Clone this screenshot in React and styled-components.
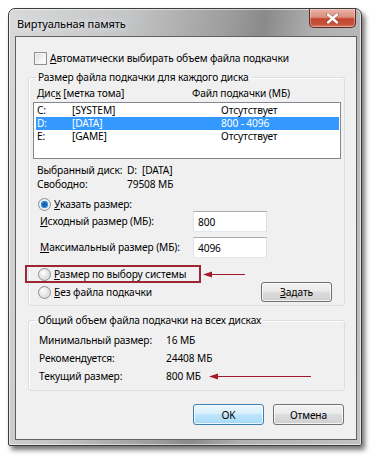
import styled, { createGlobalStyle } from "styled-components";

const GlobalStyle = createGlobalStyle`
  html, body {
    margin: 0;
    padding: 0;
    background: #ffffff;
  }
  body {
    font-family: "Noto Sans", "Open Sans", sans-serif;
    font-size: 10.2px;
    letter-spacing: -0.12px;
    color: #000;
  }
`;

const Page = styled.div`
  width: 373px;
  height: 458px;
  padding: 8px 0 0 8px;
  box-sizing: border-box;
`;

const Window = styled.div`
  width: 354px;
  height: 438px;
  box-sizing: border-box;
  display: flex;
  flex-direction: column;
  border: 1px solid #3c3c3c;
  border-radius: 7px 7px 2px 2px;
  background: linear-gradient(100deg, #d8d9da 0%, #c4c5c6 28%, #9c9c9c 52%, #8a8a8a 60%, #b0b0b0 72%, #c2c2c2 100%);
  box-shadow: 3px 4px 5px rgba(0, 0, 0, 0.55), inset 0 0 0 1px rgba(255, 255, 255, 0.55);
`;

const TitleBar = styled.div`
  height: 27px;
  display: flex;
  justify-content: space-between;
  align-items: flex-start;
  padding: 0 5px 0 8px;
`;

const Title = styled.span`
  align-self: center;
  font-size: 11px;
  letter-spacing: -0.1px;
  margin-top: 1px;
  color: #000;
  text-shadow: 0 0 6px rgba(255, 255, 255, 0.9);
`;

const CloseButton = styled.div`
  width: 47px;
  height: 19px;
  box-sizing: border-box;
  border: 1px solid #5e2a22;
  border-top: none;
  border-radius: 0 0 5px 5px;
  background: linear-gradient(180deg, #e9b3a6 0%, #dc8f7e 45%, #c54530 55%, #c8513b 85%, #d8806c 100%);
  display: flex;
  align-items: center;
  justify-content: center;
  box-shadow: inset 0 0 0 1px rgba(255, 255, 255, 0.35);
`;

const Client = styled.div`
  flex: 1;
  margin: 0 4px 5px 6px;
  background: #f0f0f0;
  border: 1px solid #5f5f5f;
  display: flex;
  flex-direction: column;
`;

const Row = styled.div`
  display: flex;
  align-items: center;
  height: ${(p) => p.$h || 13}px;
  margin-top: ${(p) => p.$mt || 0}px;
  padding-left: ${(p) => p.$pl || 0}px;
`;

const CheckBox = styled.span`
  width: 13px;
  height: 13px;
  box-sizing: border-box;
  border: 1px solid #8e8f8f;
  background: linear-gradient(135deg, #dcdcdc 0%, #f4f4f4 60%, #ffffff 100%);
  box-shadow: inset 0 0 0 1px #f4f4f4;
  margin-right: 3px;
`;

const Radio = styled.span`
  width: 13px;
  height: 13px;
  box-sizing: border-box;
  border-radius: 50%;
  border: 1px solid #8e8f8f;
  background: ${(p) =>
    p.$checked
      ? "radial-gradient(circle, #1b5fa8 0 2px, #3f8ed8 2.5px 3.5px, #e6eef6 4px)"
      : "radial-gradient(circle at 40% 35%, #ffffff 0, #e6e6e6 45%, #cfcfcf 100%)"};
  margin-right: 3px;
  flex-shrink: 0;
`;

const Label = styled.span`
  white-space: nowrap;
  line-height: 13px;
`;

const Group = styled.fieldset`
  margin: ${(p) => p.$mt}px 11px 0 12px;
  padding: ${(p) => p.$pad};
  border: 1px solid #d5dfe5;
  border-radius: 3px;
  box-shadow: 1px 1px 0 #ffffff inset;
  min-width: 0;
`;

const Legend = styled.legend`
  padding: 0 2px 0 2px;
  margin-left: 3px;
  line-height: 13px;
  white-space: nowrap;
`;

const Header = styled.div`
  display: flex;
  height: 15px;
  align-items: center;
  padding-left: 4px;
`;

const Col = styled.span`
  width: ${(p) => (p.$w ? `${p.$w}px` : "auto")};
  flex-shrink: 0;
  white-space: nowrap;
`;

const ListBox = styled.div`
  margin-top: 2px;
  margin-right: 1px;
  height: 57px;
  box-sizing: border-box;
  border: 1px solid #828790;
  background: #ffffff;
  padding-top: 1px;
`;

const ListRow = styled.div`
  display: flex;
  align-items: center;
  height: 13px;
  line-height: 13px;
  margin: 0 1px 0 2px;
  padding-left: 1px;
  background: ${(p) => (p.$selected ? "#3399ff" : "transparent")};
  color: ${(p) => (p.$selected ? "#ffffff" : "#000000")};
`;

const InfoList = styled.div`
  margin-top: ${(p) => p.$mt}px;
  padding-left: ${(p) => p.$pl}px;
`;

const InfoRow = styled.div`
  display: flex;
  align-items: center;
  height: ${(p) => p.$h}px;
  line-height: ${(p) => p.$h}px;
`;

const TextBox = styled.div`
  width: 74px;
  height: 21px;
  box-sizing: border-box;
  border: 1px solid #abadb3;
  border-left-color: #e2e3ea;
  border-right-color: #dbdfe6;
  border-bottom-color: #e3e9ef;
  background: #ffffff;
  padding: 0 4px;
  display: flex;
  align-items: center;
  margin-left: auto;
  margin-right: 75px;
`;

const Highlight = styled.div`
  display: flex;
  align-items: center;
  margin-top: 7px;
  margin-left: -8px;
`;

const RedBox = styled.div`
  width: 176px;
  height: 18px;
  box-sizing: border-box;
  border: 2px solid #9c2536;
  display: flex;
  align-items: center;
  padding-left: 11px;
`;

const BottomRow = styled.div`
  display: flex;
  align-items: center;
  justify-content: space-between;
  height: 20px;
  margin-top: -1px;
  padding: 0 10px 0 5px;
`;

const Button = styled.div`
  width: 71px;
  height: ${(p) => p.$h || 21}px;
  box-sizing: border-box;
  border: 1px solid ${(p) => (p.$default ? "#3c7fb1" : "#707070")};
  border-radius: 3px;
  display: flex;
  align-items: center;
  justify-content: center;
  background: ${(p) =>
    p.$default
      ? "linear-gradient(180deg, #eaf6fd 0%, #d9f0fc 45%, #bee6fd 50%, #a7d9f5 100%)"
      : "linear-gradient(180deg, #f2f2f2 0%, #ebebeb 45%, #dddddd 50%, #cfcfcf 100%)"};
  box-shadow: inset 0 0 0 1px rgba(255, 255, 255, 0.75);
`;

const ButtonRow = styled.div`
  display: flex;
  justify-content: flex-end;
  gap: 9px;
  margin: 13px 12px 0 0;
`;

const Arrow = ({ length }) => (
  <svg width={length} height="7" viewBox={`0 0 ${length} 7`}>
    <line x1="6" y1="3.5" x2={length} y2="3.5" stroke="#a3182b" strokeWidth="1" />
    <polygon points="0,3.5 9,0.5 9,6.5" fill="#a3182b" />
  </svg>
);

const ArrowSlot = styled.span`
  display: flex;
  margin-left: ${(p) => p.$ml}px;
`;

const drives = [
  { letter: "C:", label: "[SYSTEM]", size: "Отсутствует" },
  { letter: "D:", label: "[DATA]", size: "800 - 4096", selected: true },
  { letter: "E:", label: "[GAME]", size: "Отсутствует" },
];

export default function App() {
  return (
    <>
      <GlobalStyle />
      <Page>
        <Window>
          <TitleBar>
            <Title>Виртуальная память</Title>
            <CloseButton>
              <svg width="13" height="11" viewBox="0 0 13 11">
                <path d="M2 1.5 L11 9.5 M11 1.5 L2 9.5" stroke="#5a1a10" strokeWidth="3.6" strokeLinecap="round" opacity="0.5" />
                <path d="M2 1.5 L11 9.5 M11 1.5 L2 9.5" stroke="#ffffff" strokeWidth="2.4" strokeLinecap="round" />
              </svg>
            </CloseButton>
          </TitleBar>
          <Client>
            <Row $mt={15} $pl={18}>
              <CheckBox />
              <Label>
                <u>А</u>втоматически выбирать объем файла подкачки
              </Label>
            </Row>

            <Group $mt={6} $pad="1px 2px 3px 4px">
              <Legend>Размер файла подкачки для каждого диска</Legend>
              <Header>
                <Col $w={155}>
                  Дис<u>к</u> [метка тома]
                </Col>
                <Col>Файл подкачки (МБ)</Col>
              </Header>
              <ListBox>
                {drives.map((d) => (
                  <ListRow key={d.letter} $selected={d.selected}>
                    <Col $w={35}>{d.letter}</Col>
                    <Col $w={149}>{d.label}</Col>
                    <Col>{d.size}</Col>
                  </ListRow>
                ))}
              </ListBox>

              <InfoList $mt={4} $pl={4}>
                <InfoRow $h={14}>
                  <Col $w={90}>Выбранный диск:</Col>
                  <Col>D:&nbsp;&nbsp;[DATA]</Col>
                </InfoRow>
                <InfoRow $h={14}>
                  <Col $w={90}>Свободно:</Col>
                  <Col>79508 МБ</Col>
                </InfoRow>
              </InfoList>

              <Row $mt={7} $pl={5}>
                <Radio $checked />
                <Label>
                  <u>У</u>казать размер:
                </Label>
              </Row>
              <Row $h={21} $pl={7}>
                <Label>
                  <u>И</u>сходный размер (МБ):
                </Label>
                <TextBox>800</TextBox>
              </Row>
              <Row $h={21} $mt={5} $pl={7}>
                <Label>
                  <u>М</u>аксимальный размер (МБ):
                </Label>
                <TextBox>4096</TextBox>
              </Row>

              <Highlight>
                <RedBox>
                  <Radio />
                  <Label>
                    <u>Р</u>азмер по выбору системы
                  </Label>
                </RedBox>
                <ArrowSlot $ml={2}>
                  <Arrow length={42} />
                </ArrowSlot>
              </Highlight>

              <BottomRow>
                <Row>
                  <Radio />
                  <Label>
                    <u>Б</u>ез файла подкачки
                  </Label>
                </Row>
                <Button $h={20}>
                  <span>
                    <u>З</u>адать
                  </span>
                </Button>
              </BottomRow>
            </Group>

            <Group $mt={8} $pad="4px 2px 5px 4px">
              <Legend>Общий объем файла подкачки на всех дисках</Legend>
              <InfoList $mt={0} $pl={6}>
                <InfoRow $h={18}>
                  <Col $w={127}>Минимальный размер:</Col>
                  <Col>16 МБ</Col>
                </InfoRow>
                <InfoRow $h={18}>
                  <Col $w={127}>Рекомендуется:</Col>
                  <Col>24408 МБ</Col>
                </InfoRow>
                <InfoRow $h={18}>
                  <Col $w={127}>Текущий размер:</Col>
                  <Col>800 МБ</Col>
                  <ArrowSlot $ml={8}>
                    <Arrow length={102} />
                  </ArrowSlot>
                </InfoRow>
              </InfoList>
            </Group>

            <ButtonRow>
              <Button $default>OK</Button>
              <Button>Отмена</Button>
            </ButtonRow>
          </Client>
        </Window>
      </Page>
    </>
  );
}
